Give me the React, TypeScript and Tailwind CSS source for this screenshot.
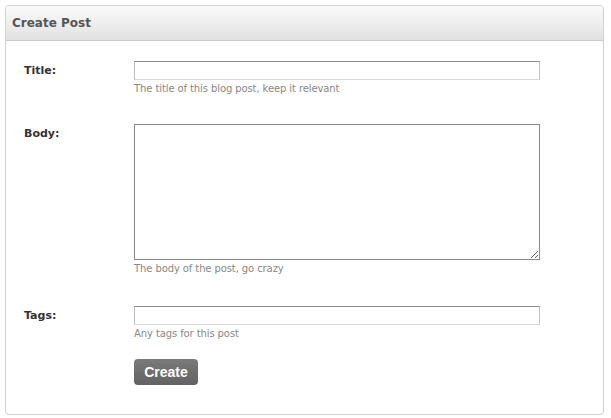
const font = "font-['Lucida_Grande','DejaVu_Sans',sans-serif]";

function Field({
  label,
  hint,
  children,
  className = "",
}: {
  label: string;
  hint: string;
  children: React.ReactNode;
  className?: string;
}) {
  return (
    <div className={`flex ${className}`}>
      <label className="w-[110px] shrink-0 text-[11px] leading-[19px] font-bold text-[#333]">
        {label}
      </label>
      <div className="flex flex-col">
        {children}
        <p className="mt-[2px] text-[10px] leading-[14px] tracking-[-0.1px] text-[#888]">{hint}</p>
      </div>
    </div>
  );
}

export default function App() {
  return (
    <div className={`h-[418px] w-[611px] bg-white p-[5px] pr-[7px] pb-[3px] ${font}`}>
      <div className="h-[410px] overflow-hidden rounded-[4px] border border-[#d2d2d2] bg-white">
        <div className="flex h-[35px] items-center border-b border-[#c9c9c9] bg-gradient-to-b from-[#fbfbfb] to-[#e1e1e1] px-[6px]">
          <h2 className="text-[12px] font-bold text-[#555]">Create Post</h2>
        </div>
        <form className="pt-[20px] pl-[18px]">
          <Field label="Title:" hint="The title of this blog post, keep it relevant">
            <input
              type="text"
              className="h-[19px] w-[406px] border border-t-[#8c8c8c] border-r-[#c4c4c4] border-b-[#dadada] border-l-[#bdbdbd] bg-white outline-none"
            />
          </Field>
          <Field
            label="Body:"
            hint="The body of the post, go crazy"
            className="mt-[28px]"
          >
            <textarea className="h-[136px] w-[406px] border border-[#8a8a8a] bg-white outline-none" />
          </Field>
          <Field label="Tags:" hint="Any tags for this post" className="mt-[30px]">
            <input
              type="text"
              className="h-[19px] w-[406px] border border-t-[#8c8c8c] border-r-[#c4c4c4] border-b-[#dadada] border-l-[#bdbdbd] bg-white outline-none"
            />
          </Field>
          <div className="mt-[18px] pl-[110px]">
            <button
              type="button"
              className="h-[26px] w-[64px] rounded-[4px] bg-gradient-to-b from-[#7a7a7a] to-[#626262] font-['Liberation_Sans',Arial,sans-serif] text-[14px] font-bold text-white"
            >
              Create
            </button>
          </div>
        </form>
      </div>
    </div>
  );
}
